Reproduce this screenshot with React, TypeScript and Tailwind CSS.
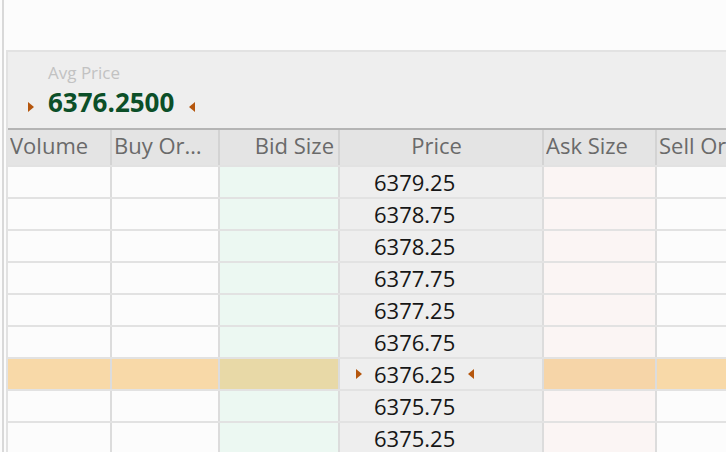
import React from 'react';

const prices = ['6379.25', '6378.75', '6378.25', '6377.75', '6377.25', '6376.75', '6376.25', '6375.75', '6375.25'];
const current = '6376.25';

const RightTri = ({ className = '' }: { className?: string }) => (
  <svg width="6" height="10" viewBox="0 0 6 10" className={className}>
    <path d="M0 0 L6 5 L0 10 Z" fill="#b5560d" />
  </svg>
);

const LeftTri = ({ className = '' }: { className?: string }) => (
  <svg width="6" height="10" viewBox="0 0 6 10" className={className}>
    <path d="M6 0 L0 5 L6 10 Z" fill="#b5560d" />
  </svg>
);

const cols = [
  { key: 'volume', label: 'Volume', w: 'w-[104px]', head: 'justify-start pl-[2px]' },
  { key: 'buy', label: 'Buy Orders', w: 'w-[108px]', head: 'justify-start pl-[2px] pr-[6px]' },
  { key: 'bid', label: 'Bid Size', w: 'w-[120px]', head: 'justify-end pr-[4px]' },
  { key: 'price', label: 'Price', w: 'w-[204px]', head: 'justify-center pr-[9px]' },
  { key: 'ask', label: 'Ask Size', w: 'w-[113px]', head: 'justify-start pl-[2px]' },
  { key: 'sell', label: 'Sell Orders', w: 'w-[120px]', head: 'justify-start pl-[2px]' },
];

const cellBg = (key: string, hl: boolean) => {
  if (key === 'price') return 'bg-[#eeeeee]';
  if (key === 'bid') return hl ? 'bg-[#e8d9a7]' : 'bg-[#ecf8f2]';
  if (key === 'ask') return hl ? 'bg-[#f6d5a8]' : 'bg-[#fbf5f4]';
  return hl ? 'bg-[#f8d9a8]' : 'bg-[#fcfcfc]';
};

export default function App() {
  return (
    <div
      className="flex h-[452px] w-[726px] overflow-hidden bg-[#fcfcfc]"
      style={{ fontFamily: '"Open Sans", "Noto Sans", sans-serif' }}
    >
      <div className="ml-[2px] w-[2px] shrink-0 bg-[#d9d9d9]" />
      <div className="ml-[2px] flex min-w-0 flex-1 flex-col pt-[50px]">
        <div className="flex flex-1 flex-col border-l-2 border-t-2 border-[#e2e2e2] bg-[#eeeeee]">
          {/* avg price */}
          <div className="pb-[8px] pl-[20px] pt-[9px]">
            <div className="pl-[20px] text-[17px] leading-[23px] text-[#c2c2c2]">Avg Price</div>
            <div className="flex items-center">
              <RightTri className="mt-[9px]" />
              <span className="ml-[14px] text-[26px] font-bold leading-[36px] text-[#0b4f28]">6376.2500</span>
              <LeftTri className="ml-[15px] mt-[9px]" />
            </div>
          </div>

          {/* table */}
          <div className="flex flex-col overflow-hidden border-t-2 border-[#b4b4b4]">
            <div className="flex h-[35px] bg-[#e4e4e4]">
              {cols.map((c) => (
                <div
                  key={c.key}
                  className={`${c.w} flex shrink-0 items-center overflow-hidden whitespace-nowrap border-r-2 border-[#d3d3d3] pb-[5px] text-[22px] leading-[30px] text-[#6a6a6a] ${c.head}`}
                >
                  <span className="truncate">{c.label}</span>
                </div>
              ))}
            </div>
            {prices.map((p) => {
              const hl = p === current;
              return (
                <div key={p} className="flex h-[32px] border-t-2 border-[#e2e2e2]">
                  {cols.map((c) => (
                    <div
                      key={c.key}
                      className={`${c.w} flex shrink-0 items-center border-r-2 border-[#dcdcdc] ${cellBg(c.key, hl)}`}
                    >
                      {c.key === 'price' && (
                        <div className="flex items-center pb-[1px] pl-[16px] text-[22px] leading-[30px] text-[#161616]">
                          <span className="flex w-[6px] items-center">{hl && <RightTri />}</span>
                          <span className="ml-[12px]">{p}</span>
                          <span className="ml-[13px] flex w-[6px] items-center">{hl && <LeftTri />}</span>
                        </div>
                      )}
                    </div>
                  ))}
                </div>
              );
            })}
          </div>
        </div>
      </div>
    </div>
  );
}
